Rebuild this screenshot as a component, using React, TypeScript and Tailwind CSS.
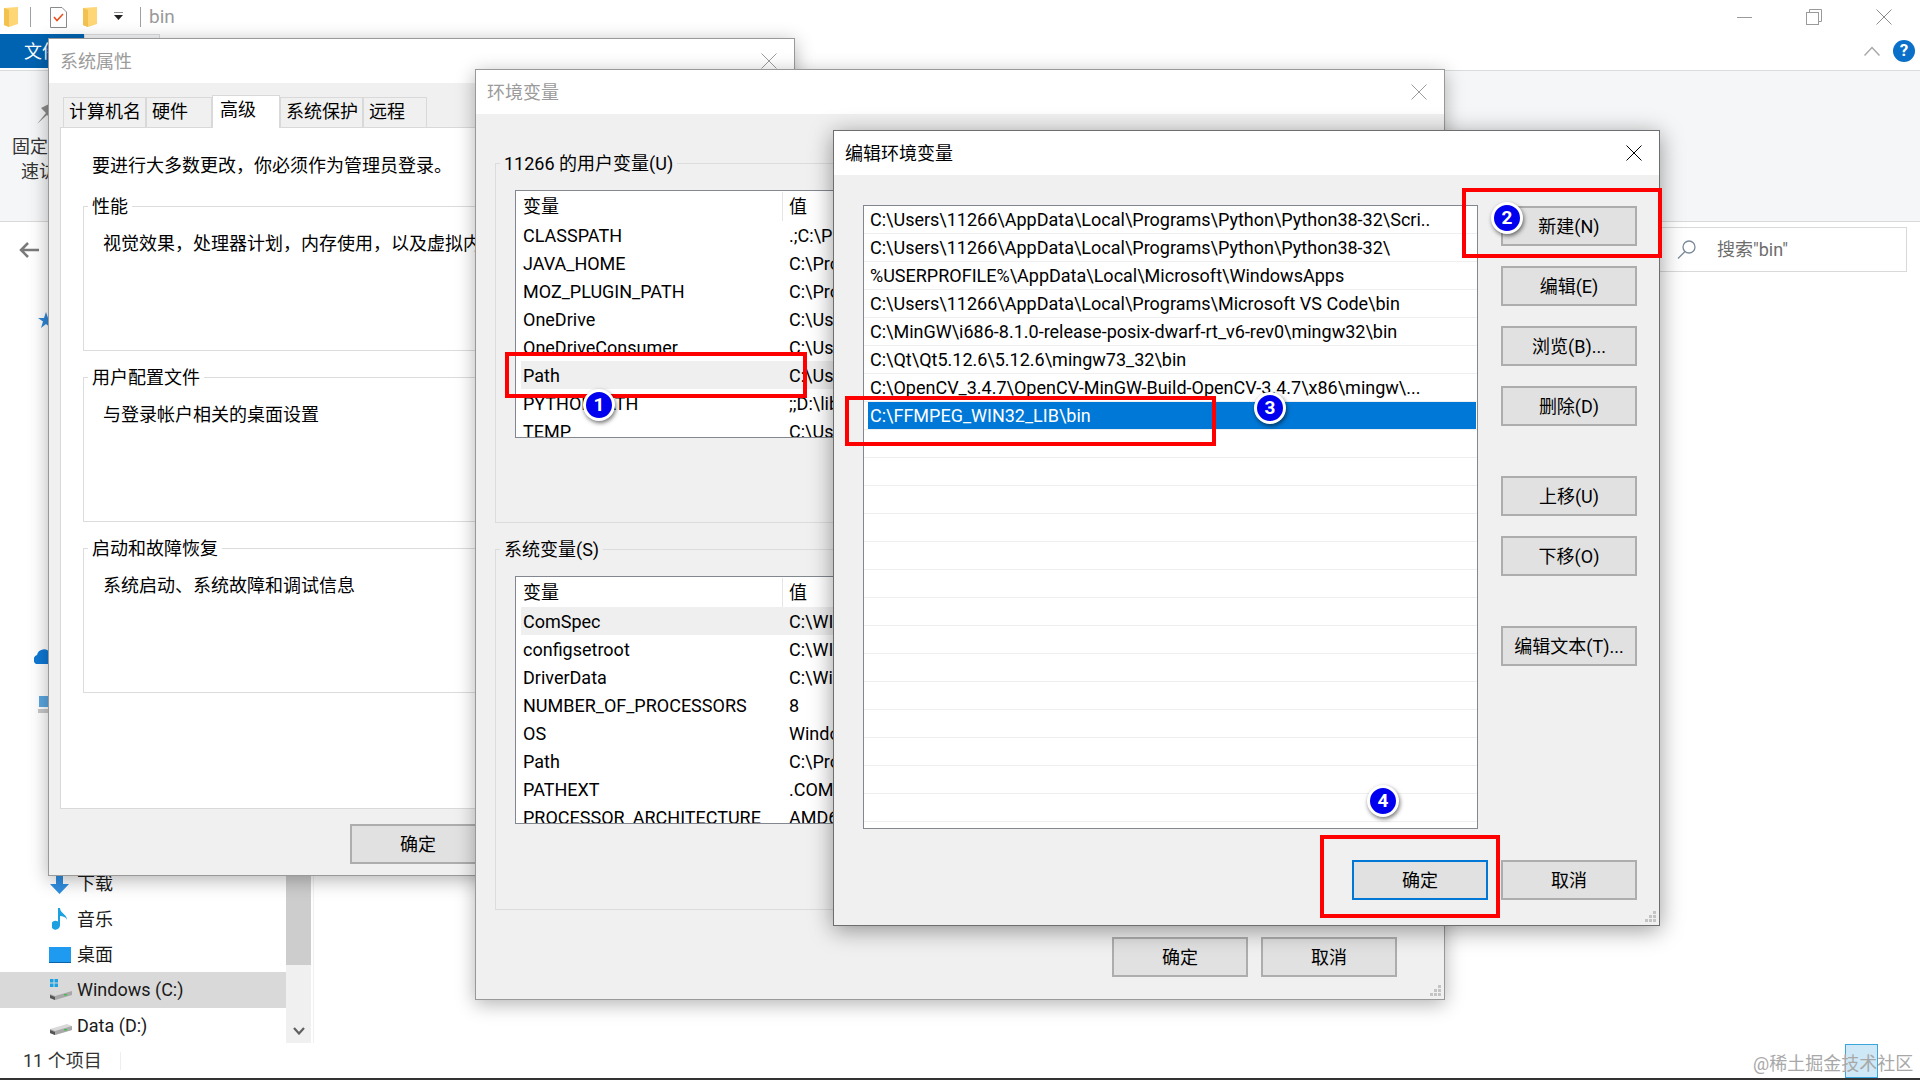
import type { ReactNode } from "react";

const userRows = [
  ["CLASSPATH", ".;C:\\Program Files"],
  ["JAVA_HOME", "C:\\Program Files"],
  ["MOZ_PLUGIN_PATH", "C:\\Program Files"],
  ["OneDrive", "C:\\Users\\11266"],
  ["OneDriveConsumer", "C:\\Users\\11266"],
  ["Path", "C:\\Users\\11266"],
  ["PYTHONPATH", ";;D:\\lib"],
  ["TEMP", "C:\\Users\\11266"],
];

const systemRows = [
  ["ComSpec", "C:\\WINDOWS"],
  ["configsetroot", "C:\\WINDOWS"],
  ["DriverData", "C:\\Windows"],
  ["NUMBER_OF_PROCESSORS", "8"],
  ["OS", "Windows_NT"],
  ["Path", "C:\\Program Files"],
  ["PATHEXT", ".COM;.EXE"],
  ["PROCESSOR_ARCHITECTURE", "AMD64"],
];

const pathRows = [
  "C:\\Users\\11266\\AppData\\Local\\Programs\\Python\\Python38-32\\Scri..",
  "C:\\Users\\11266\\AppData\\Local\\Programs\\Python\\Python38-32\\",
  "%USERPROFILE%\\AppData\\Local\\Microsoft\\WindowsApps",
  "C:\\Users\\11266\\AppData\\Local\\Programs\\Microsoft VS Code\\bin",
  "C:\\MinGW\\i686-8.1.0-release-posix-dwarf-rt_v6-rev0\\mingw32\\bin",
  "C:\\Qt\\Qt5.12.6\\5.12.6\\mingw73_32\\bin",
  "C:\\OpenCV_3.4.7\\OpenCV-MinGW-Build-OpenCV-3.4.7\\x86\\mingw\\...",
  "C:\\FFMPEG_WIN32_LIB\\bin",
  ...Array.from({ length: 15 }, () => ""),
];

function CloseIcon({ color = "#000" }: { color?: string }) {
  return (
    <svg width="16" height="16" viewBox="0 0 16 16" fill="none" stroke={color} strokeWidth="1">
      <path d="M0.5 0.5L15.5 15.5M15.5 0.5L0.5 15.5" />
    </svg>
  );
}

function Folder({ className }: { className: string }) {
  return (
    <svg className={className} viewBox="0 0 14 20">
      <path d="M0 1L14 0V17L5 20L0 18Z" fill="#ffd675" />
      <path d="M0 1L5 3V20L0 18Z" fill="#f2c14e" />
    </svg>
  );
}

function Grip() {
  return (
    <svg className="absolute right-[2px] bottom-[2px]" width="12" height="12" viewBox="0 0 12 12" fill="#c4c4c4">
      <rect x="8" y="0" width="3" height="3" />
      <rect x="4" y="4" width="3" height="3" />
      <rect x="8" y="4" width="3" height="3" />
      <rect x="0" y="8" width="3" height="3" />
      <rect x="4" y="8" width="3" height="3" />
      <rect x="8" y="8" width="3" height="3" />
    </svg>
  );
}

function Drive({ windows }: { windows?: boolean }) {
  return (
    <svg width="24" height="24" viewBox="0 0 24 24">
      {windows && <path d="M1 1h3.5v3.5H1zM5.5 1H9v3.5H5.5zM1 5.500h3.500V9H1zM5.500 5.500H9V9H5.500z" fill="#1ba1e2" />}
      <path d="M1 16L18 11L23 13V17L6 22L1 20Z" fill="#d9d9d9" />
      <path d="M1 16L6 18L23 13V17L6 22L1 20Z" fill="#a8a8a8" />
      <path d="M1 17L6 19V22L1 20Z" fill="#555" />
      <rect x="15" y="16" width="3" height="1.500" fill="#3fbf4f" />
    </svg>
  );
}

function Btn({ children, focused }: { children: ReactNode; focused?: boolean }) {
  return (
    <div
      className={
        focused
          ? "w-[136px] h-[40px] shrink-0 flex items-center justify-center bg-[#e1e1e1] border-2 border-[#0078d7] text-black"
          : "w-[136px] h-[40px] shrink-0 flex items-center justify-center bg-[#e1e1e1] border-2 border-[#adadad] text-black"
      }
    >
      {children}
    </div>
  );
}

function TitleBar({ title, active }: { title: string; active?: boolean }) {
  return (
    <div className="h-[44px] shrink-0 bg-white flex items-center justify-between pl-[11px] pr-[17px]">
      <span className={active ? "text-black" : "text-[#9b9b9b]"}>{title}</span>
      <CloseIcon color={active ? "#000" : "#9b9b9b"} />
    </div>
  );
}

function Group({ label, bg, className, children }: { label: string; bg: string; className: string; children?: ReactNode }) {
  return (
    <div className={"relative border border-[#dcdcdc] " + className}>
      <span className={"absolute left-[4px] -top-[14px] h-[27px] leading-[27px] px-[4px] " + bg}>{label}</span>
      {children}
    </div>
  );
}

function VarList({ rows, selected }: { rows: string[][]; selected: string }) {
  return (
    <div className="ml-[19px] mt-[26px] w-[880px] h-[248px] overflow-hidden bg-white border border-[#828790]">
      <div className="h-[30px] flex items-center pl-[7px] pt-[1px]">
        <span className="w-[259px]">变量</span>
        <span className="h-full border-l border-[#e5e5e5] pl-[6px] flex items-center">值</span>
      </div>
      {rows.map(([name, value]) => (
        <div
          key={name}
          className={
            name === selected
              ? "h-[28px] ml-[5px] pl-[2px] flex items-center bg-[#efefef] whitespace-nowrap"
              : "h-[28px] ml-[5px] pl-[2px] flex items-center whitespace-nowrap"
          }
        >
          <span className="w-[266px] shrink-0">{name}</span>
          <span>{value}</span>
        </div>
      ))}
    </div>
  );
}

function Badge({ n, className }: { n: number; className: string }) {
  return (
    <div
      className={
        "absolute w-[32px] h-[32px] rounded-full bg-[#0000ee] border-[3px] border-white shadow-[1px_2px_4px_rgba(0,0,0,0.55)] flex items-center justify-center text-white font-bold text-[19px] " +
        className
      }
    >
      {n}
    </div>
  );
}

function Explorer() {
  return (
    <div className="w-[1920px] h-[1080px] flex flex-col bg-white overflow-hidden">
      {/* title bar */}
      <div className="h-[34px] shrink-0 flex items-center relative">
        <Folder className="ml-[4px] w-[14px] h-[20px]" />
        <div className="ml-[12px] w-px h-[20px] bg-[#a0a0a0]" />
        <svg className="ml-[19px]" width="17" height="21" viewBox="0 0 17 21">
          <path d="M0.500 0.500H12L16.500 5V20.500H0.500Z" fill="#fff" stroke="#8a8a8a" />
          <path d="M4 10L7 13.500L13 7" fill="none" stroke="#e8501f" strokeWidth="1.600" />
        </svg>
        <Folder className="ml-[16px] w-[14px] h-[20px]" />
        <svg className="ml-[17px]" width="10" height="10" viewBox="0 0 10 10">
          <path d="M0 0H9" stroke="#222" strokeWidth="1" />
          <path d="M0 3H9L4.500 8Z" fill="#222" />
        </svg>
        <div className="ml-[16px] w-px h-[20px] bg-[#a0a0a0]" />
        <span className="ml-[8px] text-[#9a9a9a] text-[19px]">bin</span>
        <div className="ml-auto flex items-center mr-[28px] gap-[54px]">
          <div className="w-[15px] h-px bg-[#9a9a9a]" />
          <svg width="16" height="16" viewBox="0 0 16 16" fill="none" stroke="#9a9a9a">
            <path d="M3.500 3.500V0.500H15.500V12.500H12.500" />
            <rect x="0.500" y="3.500" width="12" height="12" />
          </svg>
          <CloseIcon color="#8c8c8c" />
        </div>
      </div>

      {/* ribbon tabs */}
      <div className="h-[37px] shrink-0 flex border-b border-[#dadbdc] relative">
        <div className="w-[84px] h-[34px] bg-[#0063b1] text-white flex items-center pl-[24px]">文件</div>
        <div className="w-[76px] h-[34px] bg-[#f5f6f7] border border-[#dadbdc]" />
        <div className="ml-auto flex items-center gap-[13px] pr-[5px] pb-[3px]">
          <svg width="16" height="10" viewBox="0 0 16 10" fill="none" stroke="#a8a8a8" strokeWidth="1.500">
            <path d="M0.500 9.500L8 1.500L15.500 9.500" />
          </svg>
          <div className="w-[22px] h-[22px] rounded-full bg-[#0a6fc9] text-white text-[17px] font-bold flex items-center justify-center">?</div>
        </div>
      </div>

      {/* ribbon */}
      <div className="h-[151px] shrink-0 bg-[#f5f6f7] border-b border-[#d9d9d9] pl-[3px] pt-[27px] text-[#333]">
        <div className="w-[90px] flex flex-col items-center leading-[25px]">
          <svg width="26" height="28" viewBox="0 0 26 28" className="mb-[8px]">
            <path d="M2 26L11 15L6 10L16 5L22 11L17 21L12 17Z" fill="#8b8b8b" />
          </svg>
          <span>固定到快</span>
          <span>速访问</span>
        </div>
      </div>

      {/* address row */}
      <div className="h-[56px] shrink-0 flex items-start pl-[19px] pr-[13px]">
        <svg className="mt-[20px]" width="20" height="16" viewBox="0 0 20 16" fill="none" stroke="#7a7a7a" strokeWidth="2.500">
          <path d="M20 8H2M9 1L2 8L9 15" />
        </svg>
        <div className="ml-auto mt-[5px] w-[400px] h-[45px] border border-[#d9d9d9] flex items-center pl-[169px] text-[#6d6d6d]">
          <svg width="19" height="19" viewBox="0 0 19 19" fill="none" stroke="#7a8a9a" strokeWidth="1.300">
            <circle cx="12" cy="7" r="6" />
            <path d="M8 11.500L1 18.500" />
          </svg>
          <span className="ml-[21px]">搜索"bin"</span>
        </div>
      </div>

      {/* nav pane */}
      <div className="flex-1 flex overflow-hidden text-[#1a1a1a]">
        <div className="w-[286px] shrink-0 flex flex-col">
          <div className="h-[36px] mt-[24px] pl-[38px] flex items-center">
            <svg width="16" height="16" viewBox="0 0 16 16"><path d="M8 0L10 6H16L11 9.500L13 16L8 12L3 16L5 9.500L0 6H6Z" fill="#2f86d6" /></svg>
          </div>
          <div className="h-[36px] mt-[301px] pl-[34px] flex items-center">
            <svg width="24" height="16" viewBox="0 0 24 16"><path d="M2 16A5 5 0 0 1 3 7A7 7 0 0 1 16 5A6 6 0 0 1 20 16Z" fill="#0f78d4" /></svg>
          </div>
          <div className="h-[36px] mt-[14px] pl-[38px] flex items-center">
            <svg width="16" height="18" viewBox="0 0 16 18"><rect x="1" y="0" width="14" height="11" fill="#5aa7e0" /><rect x="0" y="13" width="16" height="4" fill="#c8c8c8" /></svg>
          </div>
          <div className="h-[36px] mt-[143px] pl-[50px] flex items-center gap-[8px]">
            <svg width="19" height="20" viewBox="0 0 19 20"><path d="M6 0H13V10H19L9.500 20L0 10H6Z" fill="#2f8ee0" /></svg>
            <span>下载</span>
          </div>
          <div className="h-[36px] pl-[52px] flex items-center gap-[9px]">
            <svg width="16" height="22" viewBox="0 0 16 22"><path d="M6 0H8C8 5 15 6 15 12C14 9 11 8 8 8V17A4.500 4.500 0 1 1 6 13.500Z" fill="#1ba1e2" /></svg>
            <span>音乐</span>
          </div>
          <div className="h-[36px] pl-[49px] flex items-center gap-[6px]">
            <div className="w-[22px] h-[16px] bg-[#1e9bf0] border-b border-[#0a62a8]" />
            <span>桌面</span>
          </div>
          <div className="h-[36px] pl-[49px] flex items-center gap-[4px] bg-[#d9d9d9]">
            <Drive windows />
            <span>Windows (C:)</span>
          </div>
          <div className="h-[36px] pl-[49px] flex items-center gap-[4px]">
            <Drive />
            <span>Data (D:)</span>
          </div>
        </div>
        <div className="w-[25px] shrink-0 bg-[#f0f0f0] flex flex-col">
          <div className="h-[687px] bg-[#cdcdcd]" />
          <div className="flex-1 flex items-end justify-center pb-[8px]">
            <svg width="12" height="8" viewBox="0 0 12 8" fill="none" stroke="#606060" strokeWidth="2.200">
              <path d="M1 1L6 6.500L11 1" />
            </svg>
          </div>
        </div>
        <div className="w-[3px] border-r border-[#f0f0f0]" />
      </div>

      {/* status bar */}
      <div className="h-[35px] shrink-0 flex items-center pl-[23px] text-[#333]">
        <span className="w-[97px]">11 个项目</span>
        <div className="w-px h-[18px] bg-[#eeeeee]" />
      </div>
      <div className="h-[2px] shrink-0 bg-[#333]" />
    </div>
  );
}

function SystemWindow() {
  const tabs = [
    { label: "计算机名", w: "w-[83px]" },
    { label: "硬件", w: "w-[66px]" },
    { label: "高级", w: "w-[68px]", active: true },
    { label: "系统保护", w: "w-[83px]" },
    { label: "远程", w: "w-[64px]" },
  ];
  return (
    <div className="absolute left-[48px] top-[38px] w-[747px] h-[838px] flex flex-col bg-[#f0f0f0] border border-[#999] shadow-[0_4px_18px_rgba(0,0,0,0.3)]">
      <TitleBar title="系统属性" />
      <div className="pl-[11px] h-[44px] shrink-0 flex items-end">
        <div className="ml-[3px] flex items-end h-[32px]">
          {tabs.map((t) =>
            t.active ? (
              <div key={t.label} className={t.w + " h-[33px] -mb-px relative z-10 bg-white border border-b-0 border-[#d9d9d9] pl-[7px] pb-[3px]"}>
                {t.label}
              </div>
            ) : (
              <div key={t.label} className={t.w + " h-[30px] border border-b-0 border-[#d9d9d9] pl-[5px]"}>
                {t.label}
              </div>
            )
          )}
        </div>
      </div>
      <div className="ml-[11px] w-[724px] h-[682px] shrink-0 bg-white border border-[#d9d9d9] pl-[22px] pr-[12px] pt-[24px]">
        <p className="pl-[9px] leading-[27px] h-[27px]">要进行大多数更改，你必须作为管理员登录。</p>
        <Group label="性能" bg="bg-white" className="mt-[27px] h-[145px]">
          <p className="pl-[19px] pt-[23px] leading-[27px] whitespace-nowrap">视觉效果，处理器计划，内存使用，以及虚拟内存</p>
        </Group>
        <Group label="用户配置文件" bg="bg-white" className="mt-[26px] h-[145px]">
          <p className="pl-[19px] pt-[23px] leading-[27px]">与登录帐户相关的桌面设置</p>
        </Group>
        <Group label="启动和故障恢复" bg="bg-white" className="mt-[26px] h-[145px]">
          <p className="pl-[19px] pt-[23px] leading-[27px]">系统启动、系统故障和调试信息</p>
        </Group>
      </div>
      <div className="ml-[301px] mt-[15px]">
        <Btn>确定</Btn>
      </div>
    </div>
  );
}

function EnvWindow() {
  return (
    <div className="absolute left-[475px] top-[69px] w-[970px] h-[931px] flex flex-col bg-[#f0f0f0] border border-[#999] shadow-[0_4px_18px_rgba(0,0,0,0.3)]">
      <div className="contents">
        <TitleBar title="环境变量" />
      </div>
      <div className="pl-[19px] pr-[19px] pt-[49px]">
        <Group label="11266 的用户变量(U)" bg="bg-[#f0f0f0]" className="h-[360px]">
          <VarList rows={userRows} selected="Path" />
        </Group>
        <Group label="系统变量(S)" bg="bg-[#f0f0f0]" className="mt-[26px] h-[361px]">
          <VarList rows={systemRows} selected="ComSpec" />
        </Group>
      </div>
      <div className="mt-[27px] flex justify-end gap-[13px] pr-[47px]">
        <Btn>确定</Btn>
        <Btn>取消</Btn>
      </div>
      <Grip />
    </div>
  );
}

function EditWindow() {
  return (
    <div className="absolute left-[833px] top-[130px] w-[827px] h-[796px] flex flex-col bg-[#f0f0f0] border border-[#6e6e6e] shadow-[0_4px_22px_rgba(0,0,0,0.4)]">
      <TitleBar title="编辑环境变量" active />
      <div className="flex pl-[29px] pt-[30px] gap-[23px]">
        <div className="w-[615px] h-[624px] overflow-hidden bg-white border border-[#828790]">
          {pathRows.map((row, i) =>
            i === 7 ? (
              <div key={i} className="h-[28px] pl-[4px] pr-[1px] border-b border-[#efefef]">
                <div className="h-[27px] pl-[2px] bg-[#0078d7] text-white flex items-center whitespace-nowrap">{row}</div>
              </div>
            ) : (
              <div key={i} className="h-[28px] pl-[6px] border-b border-[#efefef] flex items-center whitespace-nowrap">
                {row}
              </div>
            )
          )}
        </div>
        <div className="flex flex-col pt-[1px]">
          <Btn>新建(N)</Btn>
          <div className="mt-[20px]"><Btn>编辑(E)</Btn></div>
          <div className="mt-[20px]"><Btn>浏览(B)...</Btn></div>
          <div className="mt-[20px]"><Btn>删除(D)</Btn></div>
          <div className="mt-[50px]"><Btn>上移(U)</Btn></div>
          <div className="mt-[20px]"><Btn>下移(O)</Btn></div>
          <div className="mt-[50px]"><Btn>编辑文本(T)...</Btn></div>
        </div>
      </div>
      <div className="mt-[31px] flex justify-end gap-[13px] pr-[22px]">
        <Btn focused>确定</Btn>
        <Btn>取消</Btn>
      </div>
      <Grip />
    </div>
  );
}

export default function App() {
  return (
    <div className="relative w-[1920px] h-[1080px] overflow-hidden font-[Roboto,'Noto_Sans_CJK_SC',sans-serif] text-[18px] text-black">
      <Explorer />
      <SystemWindow />
      <EnvWindow />
      <EditWindow />

      {/* red callouts */}
      <div className="absolute left-[505px] top-[352px] w-[302px] h-[46px] border-4 border-[#ff0000]" />
      <div className="absolute left-[1462px] top-[188px] w-[200px] h-[70px] border-4 border-[#ff0000]" />
      <div className="absolute left-[845px] top-[396px] w-[371px] h-[50px] border-4 border-[#ff0000]" />
      <div className="absolute left-[1320px] top-[835px] w-[180px] h-[83px] border-4 border-[#ff0000]" />

      <Badge n={1} className="left-[583px] top-[389px]" />
      <Badge n={2} className="left-[1491px] top-[202px]" />
      <Badge n={3} className="left-[1254px] top-[392px]" />
      <Badge n={4} className="left-[1367px] top-[785px]" />

      {/* watermark */}
      <div className="absolute left-[1845px] top-[1044px] w-[33px] h-[34px] bg-[#cfe8f7] border border-[#3aa6dd]" />
      <div className="absolute left-[1753px] top-[1050px] text-[#a8a8a8] whitespace-nowrap">@稀土掘金技术社区</div>
    </div>
  );
}
